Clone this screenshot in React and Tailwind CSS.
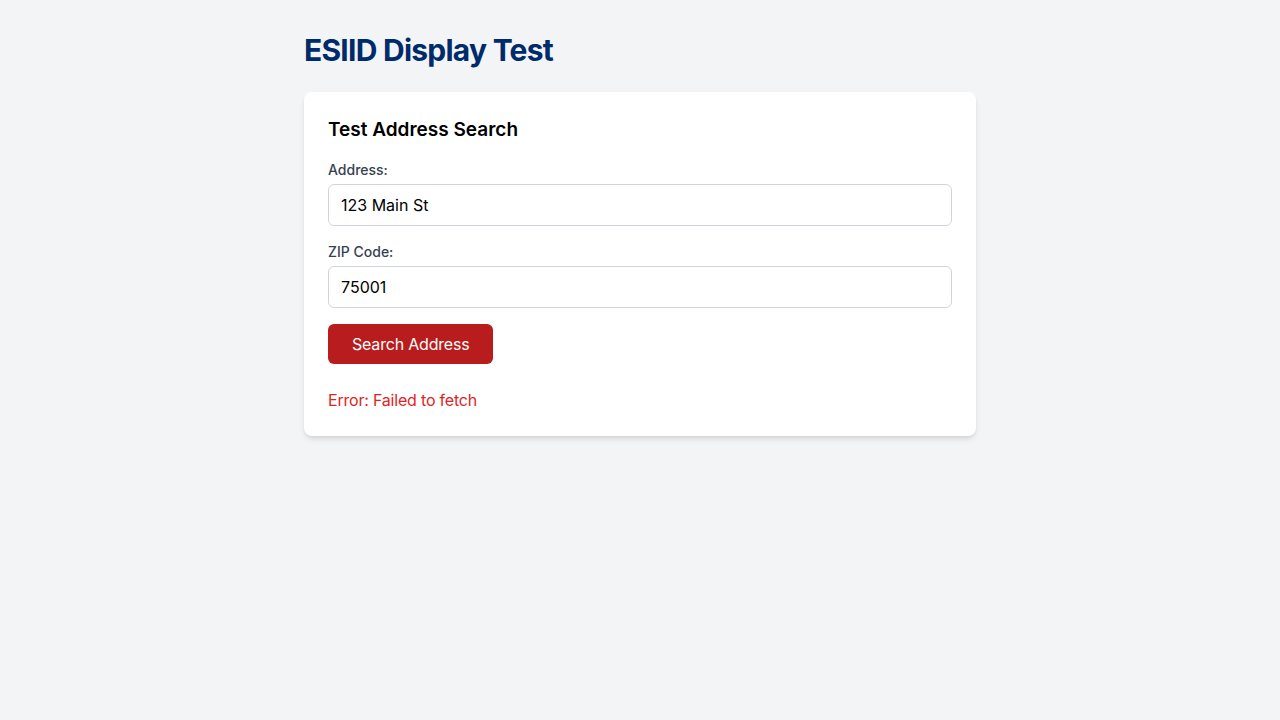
import { useState } from 'react';

function App() {
  const [address, setAddress] = useState('123 Main St');
  const [zip, setZip] = useState('75001');
  const [error] = useState('Failed to fetch');

  return (
    <div className="min-h-screen bg-[#f3f4f6] font-['Inter',sans-serif]">
      <div className="mx-auto max-w-2xl pt-8">
        <h1 className="mb-6 text-3xl font-bold tracking-tight text-[#002b6b]">ESIID Display Test</h1>

        <div className="rounded-lg bg-white p-6 shadow-md">
          <h2 className="mb-4 text-[19px] leading-7 font-semibold text-black">Test Address Search</h2>

          <div className="mb-4">
            <label className="mb-1 block text-sm leading-5 font-medium text-[#374151]">Address:</label>
            <input
              type="text"
              value={address}
              onChange={(e) => setAddress(e.target.value)}
              className="w-full rounded-md border border-[#d1d5db] px-3 py-2 text-base text-black outline-none"
            />
          </div>

          <div className="mb-4">
            <label className="mb-1 block text-sm leading-5 font-medium text-[#374151]">ZIP Code:</label>
            <input
              type="text"
              value={zip}
              onChange={(e) => setZip(e.target.value)}
              className="w-full rounded-md border border-[#d1d5db] px-3 py-2 text-base text-black outline-none"
            />
          </div>

          <button
            type="button"
            className="rounded-md bg-[#b91c1c] px-6 py-2 text-base tracking-[-0.2px] text-white hover:bg-[#991b1b]"
          >
            Search Address
          </button>

          {error ? <p className="mt-6 text-base tracking-[-0.2px] text-[#dc2626]">Error: {error}</p> : null}
        </div>
      </div>
    </div>
  );
}

export default App;
